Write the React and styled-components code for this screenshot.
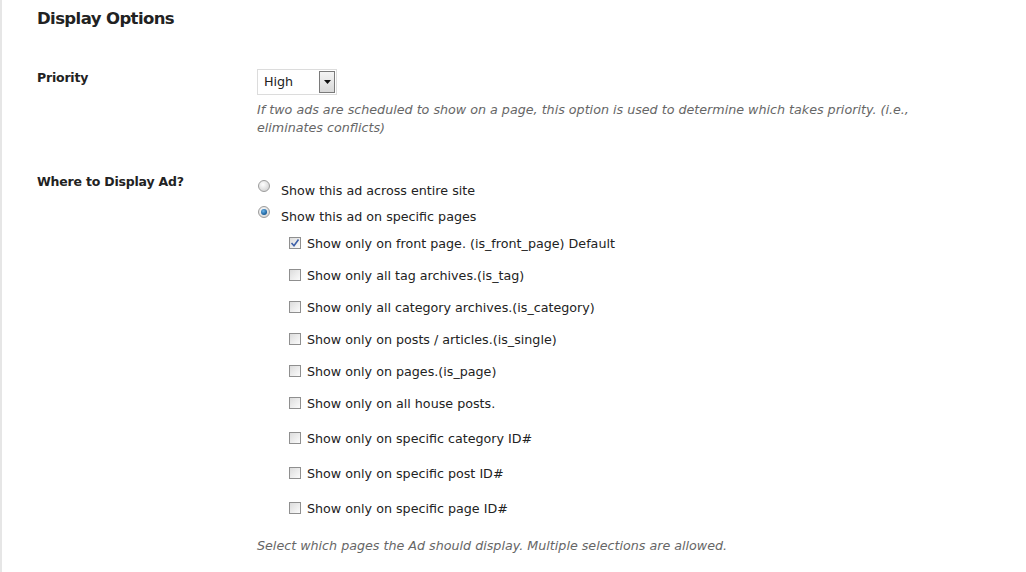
import React from "react";
import styled, { createGlobalStyle } from "styled-components";

const Global = createGlobalStyle`
  html, body { margin: 0; padding: 0; background: #fff; }
  body { font-family: "DejaVu Sans", Verdana, sans-serif; color: #333; }
`;

const Page = styled.div`
  width: 1026px;
  height: 572px;
  box-sizing: border-box;
  border-left: 2px solid #e6e6e6;
  padding: 7px 0 0 35px;
  overflow: hidden;
`;

const Heading = styled.h2`
  margin: 0 0 38px 0;
  font-size: 16.5px;
  letter-spacing: -0.6px;
  font-weight: bold;
  color: #222;
  line-height: 24px;
`;

const Row = styled.div`
  display: grid;
  grid-template-columns: 220px 1fr;
  margin-bottom: ${(p) => p.$gap || 0}px;
`;

const Label = styled.div`
  font-size: 12.5px;
  font-weight: bold;
  color: #222;
  letter-spacing: -0.2px;
  line-height: 18px;
`;

const Field = styled.div`
  display: flex;
  flex-direction: column;
`;

const SelectBox = styled.div`
  display: flex;
  width: 80px;
  height: 26px;
  box-sizing: border-box;
  border: 1px solid #dcdcdc;
  background: #fff;
  align-items: stretch;
`;

const SelectValue = styled.div`
  flex: 1;
  font-size: 12.7px;
  color: #222;
  line-height: 24px;
  padding-left: 6px;
`;

const SelectArrow = styled.div`
  width: 16px;
  margin: 1px 1px 1px 0;
  border: 1px solid #7a7a7a;
  box-sizing: border-box;
  background: linear-gradient(#f4f4f4, #d8d8d8);
  display: flex;
  align-items: center;
  justify-content: center;
`;

const Desc = styled.p`
  margin: ${(p) => p.$mt || 0}px 0 0 0;
  font-size: 12.7px;
  font-style: italic;
  color: #666;
  line-height: 18px;
  max-width: 690px;
`;

const OptionList = styled.div`
  display: flex;
  flex-direction: column;
  padding-top: 4px;
`;

const RadioRow = styled.label`
  display: flex;
  align-items: center;
  height: 26px;
  font-size: 12.7px;
  color: #222;
  gap: 11px;
`;

const Radio = styled.span`
  width: 12px;
  height: 12px;
  border-radius: 50%;
  box-sizing: border-box;
  border: 1px solid #9c9c9c;
  background: radial-gradient(circle at 40% 35%, #ffffff, #d4d4d4 80%);
  display: inline-flex;
  align-items: center;
  justify-content: center;
  margin-left: 1px;
  margin-top: -8px;
  &::after {
    content: "";
    display: ${(p) => (p.$checked ? "block" : "none")};
    width: 6px;
    height: 6px;
    border-radius: 50%;
    background: radial-gradient(circle at 40% 35%, #6ab4ea, #0a4f8c 80%);
  }
`;

const CheckList = styled.div`
  display: flex;
  flex-direction: column;
  padding-left: 32px;
  margin-top: -2px;
`;

const CheckRow = styled.label`
  display: flex;
  align-items: center;
  height: 32px;
  margin-top: ${(p) => p.$mt || 0}px;
  font-size: 12.7px;
  color: #222;
  gap: 6px;
`;

const Check = styled.span`
  width: 12px;
  height: 12px;
  box-sizing: border-box;
  border: 1px solid #8f8f8f;
  background: linear-gradient(135deg, #dcdcdc, #fbfbfb);
  display: inline-flex;
  align-items: center;
  justify-content: center;
`;

const Tick = () => (
  <svg width="10" height="10" viewBox="0 0 10 10">
    <path d="M1.5 5 L4 7.8 L8.5 1.5" fill="none" stroke="#3c5fa8" strokeWidth="1.6" />
  </svg>
);

const checks = [
  ["Show only on front page. (is_front_page) Default", true, 0],
  ["Show only all tag archives.(is_tag)", false, 0],
  ["Show only all category archives.(is_category)", false, 0],
  ["Show only on posts / articles.(is_single)", false, 0],
  ["Show only on pages.(is_page)", false, 0],
  ["Show only on all house posts.", false, 0],
  ["Show only on specific category ID#", false, 3],
  ["Show only on specific post ID#", false, 3],
  ["Show only on specific page ID#", false, 3],
];

export default function App() {
  return (
    <>
      <Global />
      <Page>
        <Heading>Display Options</Heading>
        <Row $gap={36}>
          <Label>Priority</Label>
          <Field>
            <SelectBox>
              <SelectValue>High</SelectValue>
              <SelectArrow>
                <svg width="7" height="4" viewBox="0 0 7 4">
                  <path d="M0 0 H7 L3.5 4 Z" fill="#111" />
                </svg>
              </SelectArrow>
            </SelectBox>
            <Desc $mt={6}>
              If two ads are scheduled to show on a page, this option is used to determine which takes priority. (i.e.,
              eliminates conflicts)
            </Desc>
          </Field>
        </Row>
        <Row>
          <Label>Where to Display Ad?</Label>
          <Field>
            <OptionList>
              <RadioRow>
                <Radio />
                Show this ad across entire site
              </RadioRow>
              <RadioRow>
                <Radio $checked />
                Show this ad on specific pages
              </RadioRow>
              <CheckList>
                {checks.map(([t, c, mt]) => (
                  <CheckRow key={t} $mt={mt}>
                    <Check>{c && <Tick />}</Check>
                    {t}
                  </CheckRow>
                ))}
              </CheckList>
            </OptionList>
            <Desc $mt={13}>Select which pages the Ad should display. Multiple selections are allowed.</Desc>
          </Field>
        </Row>
      </Page>
    </>
  );
}
